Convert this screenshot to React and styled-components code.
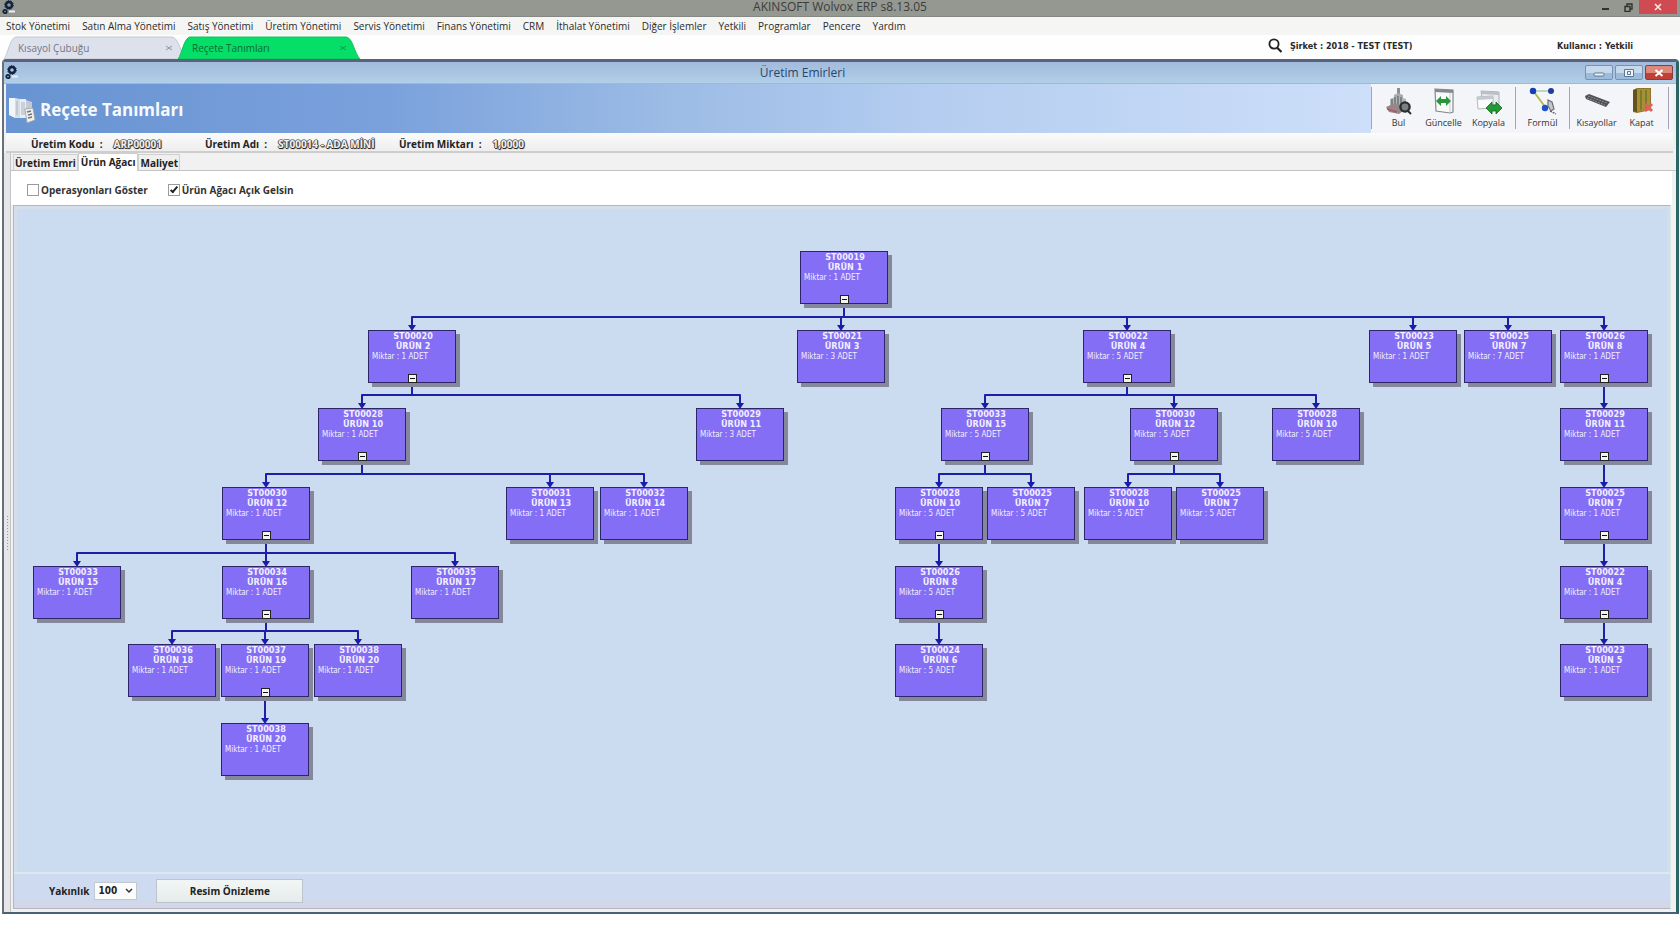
import React from "react";
import styled, { createGlobalStyle, css } from "styled-components";

const ui = `"Open Sans", "Noto Sans", sans-serif`;
const tahoma = `"DejaVu Sans Condensed", "DejaVu Sans", sans-serif`;

const GlobalStyle = createGlobalStyle`
  *, *::before, *::after { box-sizing: border-box; }
  body { margin: 0; background: #fff; font-family: ${ui}; color: #222; }
  button, input, select { font: inherit; color: inherit; margin: 0; }
  button { background: none; border: 0; padding: 0; cursor: pointer; }
`;

const Page = styled.div`
  min-height: 100vh;
  display: flex;
  flex-direction: column;
  padding-bottom: 31px;
`;

const AppTitleBar = styled.header`
  height: 17px;
  background: #959791;
  border-bottom: 1px solid #868883;
  display: grid;
  grid-template-columns: 100px 1fr 100px;
  align-items: start;
`;

const AppTitle = styled.h1`
  margin: 0;
  font-size: 12px;
  line-height: 14px;
  font-weight: 400;
  text-align: center;
  color: #3b3d3a;
`;

const GearLogo = styled.svg`
  display: block;
  width: 16px;
  height: 16px;
`;

const AppLogo = styled.div`
  padding-left: 1px;
`;

const AppControls = styled.div`
  display: flex;
  justify-content: flex-end;
  padding-right: 3px;
`;

const AppControl = styled.button`
  width: ${(p) => (p.$close ? 38 : 22)}px;
  height: 14px;
  display: grid;
  place-items: center;
  color: ${(p) => (p.$close ? "#fbe9e9" : "#30322f")};
  background: ${(p) => (p.$close ? "#cf4a51" : "transparent")};
`;

const MenuBar = styled.nav`
  height: 18px;
  background: #f5f5f4;
  display: flex;
  align-items: center;
  gap: 12px;
  padding: 0 6px;
`;

const MenuItem = styled.button`
  font-size: 10px;
  line-height: 16px;
  color: #2b2b2b;
  white-space: nowrap;
`;

const TabStrip = styled.div`
  height: 24px;
  background: #fdfefd;
  display: flex;
  align-items: flex-end;
`;

const DocTabs = styled.div`
  display: flex;
  flex: 1;
  padding-left: 4px;
`;

const DocTab = styled.div`
  position: relative;
  width: 182px;
  height: 23px;
  margin-right: -8px;
  padding: 0 14px 0 14px;
  display: flex;
  align-items: center;
  justify-content: space-between;
  color: ${(p) => (p.$active ? "#0b6a35" : "#6f7785")};
`;

const DocTabShape = styled.svg`
  position: absolute;
  inset: 0;
  width: 100%;
  height: 100%;
`;

const DocTabButton = styled.button`
  position: relative;
  font-size: 10px;
  line-height: 16px;
`;

const StatusArea = styled.div`
  width: 420px;
  height: 22px;
  align-self: flex-start;
  display: flex;
  align-items: center;
  font: 700 9px/14px ${tahoma};
  color: #2a2a2a;
`;

const SearchButton = styled.button`
  width: 30px;
  height: 16px;
  display: block;
`;

const StatusText = styled.span`
  white-space: nowrap;
  &:last-child { margin-left: auto; margin-right: 47px; }
`;

const Window = styled.main`
  flex: 1;
  display: flex;
  flex-direction: column;
  margin: 0 1px 0 2px;
  border: 2px solid #4a6275;
  border-top: 3px solid #59647c;
  border-left-color: #68707a;
  border-right: 3px solid #2b6566;
  border-radius: 4px 4px 0 0;
  background: #f1f1f2;
`;

const WindowTitleBar = styled.div`
  height: 22px;
  display: flex;
  align-items: center;
  background: linear-gradient(#a3bbdc, #a9c4e1 50%, #b2cfe8);
  border-bottom: 1px solid #9db8d8;
`;

const WindowLogo = styled.div`
  width: 16px;
`;

const WindowTitle = styled.h2`
  flex: 1;
  margin: 0;
  font-size: 12px;
  line-height: 18px;
  font-weight: 400;
  text-align: center;
  color: #27466d;
`;

const WindowControls = styled.div`
  display: flex;
  gap: 2px;
  padding-right: 3px;
`;

const WindowControl = styled.button`
  width: 28px;
  height: 15px;
  display: grid;
  place-items: center;
  border: 1px solid #7592b4;
  border-radius: 2px;
  background: linear-gradient(#c5d8ec 50%, #9dbbdb 50%);
  ${(p) => p.$close && css`
    border-color: #833f42;
    background: linear-gradient(#dd8878 50%, #c04038 50%);
  `}
`;

const Banner = styled.div`
  display: flex;
  height: 49px;
  margin: 0 3px 0 2px;
  background: #f4f5f9;
`;

const BannerTitle = styled.div`
  flex: 1;
  display: flex;
  align-items: center;
  gap: 4px;
  padding: 2px 0 0 2px;
  background: linear-gradient(90deg, #6794d2 0%, #7ba1dc 28%, #9bbbe5 48%, #b5cdf0 68%, #cddff9 100%);
  h3 {
    margin: 0;
    font-size: 17px;
    line-height: 24px;
    color: #f6faff;
  }
`;

const Toolbar = styled.div`
  display: flex;
  align-items: flex-start;
  padding: 3px 4px 0 0;
`;

const ToolGroup = styled.div`
  display: flex;
  height: 42px;
  border-left: 1px solid #a3a6ac;
  padding: 0 4px;
  &:last-child { border-right: 1px solid #a3a6ac; }
`;

const ToolButton = styled.button`
  width: 45px;
  height: 42px;
  display: flex;
  flex-direction: column;
  align-items: center;
  gap: 2px;
  font-size: 9px;
  line-height: 12px;
  color: #333;
  white-space: nowrap;
  svg { width: 28px; height: 28px; display: block; }
`;

const InfoRow = styled.dl`
  margin: 0 3px 0 2px;
  height: 20px;
  display: flex;
  align-items: center;
  padding: 3px 0 0 25px;
  background: linear-gradient(#fbfbfb, #eeeeef);
  border-bottom: 2px solid #cdcecd;
  font-size: 10px;
  line-height: 14px;
  font-weight: 700;
`;

const InfoPair = styled.div`
  display: flex;
  gap: 11px;
  width: ${(p) => p.$width}px;
  dt { white-space: pre; color: #222; }
  dd {
    margin: 0;
    font-size: 10px;
    color: #f2f2f2;
    white-space: nowrap;
    text-shadow: 1px 0 0 #444, -1px 0 0 #555, 0 1px 0 #222, 0 -1px 0 #888, 1px 1px 1px #333;
  }
`;

const Body = styled.div`
  flex: 1;
  display: flex;
`;

const Splitter = styled.div`
  width: 7px;
  display: flex;
  align-items: center;
  justify-content: center;
  background: #e6e6ea;
  border-right: 1px solid #c4c4c8;
  &::before {
    content: "";
    width: 3px;
    height: 36px;
    background: radial-gradient(circle, #9a9aa0 1px, transparent 1px) 0 0 / 3px 3px;
  }
`;

const Content = styled.section`
  flex: 1;
  min-width: 0;
  display: flex;
  flex-direction: column;
`;

const PageTabs = styled.div`
  height: 18px;
  display: flex;
  align-items: flex-end;
  border-bottom: 1px solid #c3c3c3;
  padding-left: 2px;
`;

const PageTab = styled.button`
  height: ${(p) => (p.$active ? 18 : 16)}px;
  margin-bottom: ${(p) => (p.$active ? -1 : 0)}px;
  padding: ${(p) => (p.$active ? "0 2px 2px" : "0 1px")};
  border: 1px solid #cfcfcf;
  border-bottom: 0;
  background: ${(p) => (p.$active ? "#fff" : "#efefef")};
  font-size: 10px;
  line-height: 14px;
  font-weight: 700;
  white-space: nowrap;
`;

const Options = styled.div`
  height: 34px;
  display: flex;
  align-items: center;
  gap: 20px;
  padding: 3px 0 0 16px;
  background: #fff;
  margin-right: 4px;
`;

const CheckLabel = styled.label`
  display: flex;
  align-items: center;
  gap: 2px;
  font-size: 10px;
  line-height: 14px;
  font-weight: 700;
  color: #333;
`;

const CheckBox = styled.input`
  appearance: none;
  width: 12px;
  height: 12px;
  border: 1px solid #9b9b9b;
  background: #fff;
  display: grid;
  place-items: center;
  &:checked::before {
    content: "";
    width: 4px;
    height: 8px;
    border: solid #222;
    border-width: 0 2px 2px 0;
    transform: rotate(40deg);
    margin-top: -2px;
  }
`;

const DiagramPanel = styled.div`
  flex: 1;
  display: flex;
  flex-direction: column;
  margin: 0 5px 3px 2px;
  border: 1px solid #b3b6bf;
  border-right-color: #dce9e6;
`;

const Canvas = styled.div`
  position: relative;
  flex: 1;
  min-height: 560px;
  background: #cbdcf0;
  border: 3px solid #d4deeb;
  border-bottom: 0;
`;

const Connectors = styled.svg`
  position: absolute;
  inset: 0;
  width: 100%;
  height: 100%;
  overflow: visible;
`;

const Node = styled.article`
  position: absolute;
  width: 88px;
  height: 53px;
  border: 1px solid #2c2668;
  background: #846ef5;
  box-shadow: 4px 4px 0 #85879a;
  font: 400 8px/11px ${tahoma};
  color: #f1efff;
  p { margin: 0; padding-left: 3px; }
`;

const NodeName = styled.div`
  font-size: 9px;
  line-height: 10px;
  font-weight: 700;
  text-align: center;
  padding-left: 2px;
`;

const Expander = styled.button`
  position: absolute;
  left: 39px;
  bottom: -1px;
  width: 9px;
  height: 9px;
  border: 1px solid #222;
  background: #f4f4ee;
  &::before {
    content: "";
    display: block;
    height: 1px;
    margin: 0 1px;
    background: #111;
  }
`;

const FooterBar = styled.footer`
  height: 36px;
  display: flex;
  align-items: center;
  padding-left: 35px;
  border-top: 2px solid #dbe9ec;
  background: linear-gradient(#cddaef 70%, #d3d6e6);
  font-size: 10px;
  line-height: 14px;
  font-weight: 700;
`;

const SelectBox = styled.span`
  display: flex;
  align-items: center;
  margin: 0 19px 0 5px;
`;

const ZoomSelect = styled.select`
  appearance: none;
  width: 43px;
  height: 18px;
  padding: 0 3px;
  border: 1px solid #c2c8d2;
  border-radius: 0;
  background: #fbfcfc;
  font: 700 10px/14px ${tahoma};
`;

const Chevron = styled.svg`
  width: 8px;
  height: 6px;
  margin-left: -12px;
  margin-right: 4px;
  pointer-events: none;
`;

const PreviewButton = styled.button`
  width: 147px;
  height: 24px;
  border: 1px solid #bcc5cc;
  background: linear-gradient(#f3f6f6, #e4eceb);
`;

const menuItems = [
  "Stok Yönetimi", "Satın Alma Yönetimi", "Satış Yönetimi", "Üretim Yönetimi",
  "Servis Yönetimi", "Finans Yönetimi", "CRM", "İthalat Yönetimi",
  "Diğer İşlemler", "Yetkili", "Programlar", "Pencere", "Yardım",
];

/* id, parent, left edge, level, code, product, quantity */
const nodes = [
  ["a", null, 783, 0, "ST00019", "ÜRÜN 1", 1],
  ["b", "a", 351, 1, "ST00020", "ÜRÜN 2", 1],
  ["c", "a", 780, 1, "ST00021", "ÜRÜN 3", 3],
  ["d", "a", 1066, 1, "ST00022", "ÜRÜN 4", 5],
  ["e", "a", 1352, 1, "ST00023", "ÜRÜN 5", 1],
  ["f", "a", 1447, 1, "ST00025", "ÜRÜN 7", 7],
  ["g", "a", 1543, 1, "ST00026", "ÜRÜN 8", 1],
  ["h", "b", 301, 2, "ST00028", "ÜRÜN 10", 1],
  ["i", "b", 679, 2, "ST00029", "ÜRÜN 11", 3],
  ["j", "d", 924, 2, "ST00033", "ÜRÜN 15", 5],
  ["k", "d", 1113, 2, "ST00030", "ÜRÜN 12", 5],
  ["l", "d", 1255, 2, "ST00028", "ÜRÜN 10", 5],
  ["m", "g", 1543, 2, "ST00029", "ÜRÜN 11", 1],
  ["n", "h", 205, 3, "ST00030", "ÜRÜN 12", 1],
  ["o", "h", 489, 3, "ST00031", "ÜRÜN 13", 1],
  ["p", "h", 583, 3, "ST00032", "ÜRÜN 14", 1],
  ["q", "j", 878, 3, "ST00028", "ÜRÜN 10", 5],
  ["r", "j", 970, 3, "ST00025", "ÜRÜN 7", 5],
  ["s", "k", 1067, 3, "ST00028", "ÜRÜN 10", 5],
  ["t", "k", 1159, 3, "ST00025", "ÜRÜN 7", 5],
  ["u", "m", 1543, 3, "ST00025", "ÜRÜN 7", 1],
  ["v", "n", 16, 4, "ST00033", "ÜRÜN 15", 1],
  ["w", "n", 205, 4, "ST00034", "ÜRÜN 16", 1],
  ["x", "n", 394, 4, "ST00035", "ÜRÜN 17", 1],
  ["y", "q", 878, 4, "ST00026", "ÜRÜN 8", 5],
  ["z", "u", 1543, 4, "ST00022", "ÜRÜN 4", 1],
  ["A", "w", 111, 5, "ST00036", "ÜRÜN 18", 1],
  ["B", "w", 204, 5, "ST00037", "ÜRÜN 19", 1],
  ["C", "w", 297, 5, "ST00038", "ÜRÜN 20", 1],
  ["D", "y", 878, 5, "ST00024", "ÜRÜN 6", 5],
  ["E", "z", 1543, 5, "ST00023", "ÜRÜN 5", 1],
  ["F", "B", 204, 6, "ST00038", "ÜRÜN 20", 1],
].map(([id, parent, x, level, code, name, qty]) => ({ id, parent, x, level, code, name, qty }));

const levelTops = [42, 121, 199, 278, 357, 435, 514];
const byId = Object.fromEntries(nodes.map((n) => [n.id, n]));
const center = (n) => n.x + 44;

function Gears() {
  return (
    <GearLogo viewBox="0 0 16 16" aria-hidden="true">
      <circle cx="8" cy="5" r="3" fill="none" stroke="#12233d" strokeWidth="2.4" />
      <circle cx="8" cy="5" r="4.4" fill="none" stroke="#12233d" strokeWidth="1" strokeDasharray="1.4 1.3" />
      <circle cx="4" cy="11.5" r="1.7" fill="none" stroke="#12233d" strokeWidth="1.8" />
      <path d="M8 11.5h6" stroke="#e8eef5" strokeWidth="2" />
    </GearLogo>
  );
}

function LedgerIcon() {
  return (
    <svg width="28" height="28" viewBox="0 0 28 28" aria-hidden="true">
      <path d="M1 2h6v20l-6-3z" fill="#f2f6fb" />
      <path d="M7 2l5 1v19l-5 0z" fill="#d5dde6" />
      <path d="M12 3l6 0v19l-6 0z" fill="#e9edf1" />
      <path d="M18 4l6 2v14l-6 3z" fill="#c3cad2" />
      <path d="M9 5v14M14 6v13M16 6v13" stroke="#aab4bf" strokeWidth="1" />
      <path d="M17 13l8-1 2 12-8 3z" fill="#f0efeb" stroke="#98a0a8" strokeWidth=".8" />
      <path d="M19 16l4-1M20 19l4-1M20 22l4-1" stroke="#6f767c" strokeWidth="1.4" />
    </svg>
  );
}

const icons = {
  bul: (
    <svg viewBox="0 0 28 28" aria-hidden="true">
      <path d="M12 1h3v9h-3z" fill="#8d9092" />
      <path d="M9 8l4-2 5 2v5H9z" fill="#a9acae" />
      <path d="M5 12l8-3 8 3v7l-8 3-8-3z" fill="#b4b7b9" />
      <path d="M7 12v6M10 10v9M13 9v10M16 10v8" stroke="#65696c" strokeWidth="1.3" />
      <path d="M1 20l9-4 12 5-8 6-10-2z" fill="#94888c" />
      <path d="M2 22l10 3" stroke="#b5535d" strokeWidth="1.6" />
      <circle cx="20" cy="20" r="4.6" fill="#7c8083" stroke="#2c2f31" strokeWidth="2.4" />
      <path d="M23 24l3 3" stroke="#2c2f31" strokeWidth="2" />
    </svg>
  ),
  guncelle: (
    <svg viewBox="0 0 28 28" aria-hidden="true">
      <path d="M5 2l18 1v22l-3 1L6 24z" fill="#f8faf9" stroke="#84898b" strokeWidth="1.2" />
      <path d="M5 2l18 1v3L5 5z" fill="#85898d" />
      <path d="M20 6v19" stroke="#c9cdd0" strokeWidth="1" />
      <path d="M6 14l5-5v3h5V9l5 5-5 5v-3h-5v3z" fill="#28953c" />
    </svg>
  ),
  kopyala: (
    <svg viewBox="0 0 28 28" aria-hidden="true">
      <path d="M6 4l18 1v13l-16 0z" fill="#e8ecef" stroke="#a9b0b6" />
      <path d="M6 4l18 1v3L6 7z" fill="#b9c0c6" />
      <path d="M2 10l16-1v12l-15 1z" fill="#fafbfc" stroke="#b3b9bf" />
      <path d="M2 10l16-1v3l-16 1z" fill="#c3c9cf" />
      <path d="M11 21l6-6v3h4v-3l6 6-6 6v-3h-4v3z" fill="#229a35" stroke="#116520" strokeWidth=".8" />
    </svg>
  ),
  formul: (
    <svg viewBox="0 0 28 28" aria-hidden="true">
      <path d="M5 4h17" stroke="#a8d3b6" strokeWidth="1.6" />
      <path d="M5 5l12 16" stroke="#adb94e" strokeWidth="1.8" />
      <circle cx="4" cy="4" r="3.2" fill="#153db4" />
      <circle cx="22" cy="4" r="3" fill="#1b3e9f" />
      <circle cx="16" cy="21" r="3.2" fill="#2250cc" />
      <path d="M19 13l4 2 2 7-3 2-3-5z" fill="#c4c7cb" stroke="#6c7075" strokeWidth="1.2" />
      <path d="M21 24l6 3" stroke="#5d6065" strokeWidth="1.4" strokeDasharray="2 1" />
    </svg>
  ),
  kisayollar: (
    <svg viewBox="0 0 28 28" aria-hidden="true">
      <path d="M2 9l4-2 21 8-4 5L3 12z" fill="#4e5256" />
      <path d="M5 9l19 7M4 11l18 7" stroke="#8d9195" strokeWidth="1" strokeDasharray="2 1" />
    </svg>
  ),
  kapat: (
    <svg viewBox="0 0 28 28" aria-hidden="true">
      <path d="M5 3l4-2 14 0v22l-14 3-4-1z" fill="#8f7528" />
      <path d="M9 2h13v20l-13 3z" fill="#a98f38" />
      <path d="M5 3l4-1v23l-4-1z" fill="#66521b" />
      <path d="M13 3v20M18 3v19" stroke="#6d7a2a" strokeWidth="1.6" />
      <path d="M17 17l7 7M24 17l-7 7" stroke="#e0605b" strokeWidth="3" />
    </svg>
  ),
};

const toolGroups = [
  [["bul", "Bul"], ["guncelle", "Güncelle"], ["kopyala", "Kopyala"]],
  [["formul", "Formül"]],
  [["kisayollar", "Kısayollar"], ["kapat", "Kapat"]],
];

function DocumentTab({ label, active }) {
  return (
    <DocTab $active={active}>
      <DocTabShape viewBox="0 0 184 23" preserveAspectRatio="none" aria-hidden="true">
        <path d="M0 23C4 18 6 2 12 1H170C177 2 178 17 184 23Z" fill={active ? "#05de67" : "#dde1ec"} stroke={active ? "#16bd5f" : "#c3c8d2"} />
      </DocTabShape>
      <DocTabButton>{label}</DocTabButton>
      <DocTabButton aria-label={`${label} kapat`}>
        <svg width="6" height="6" viewBox="0 0 6 6" display="block">
          <path d="M0 1l6 4M0 5l6-4" stroke={active ? "#0da34d" : "#8c92a0"} />
        </svg>
      </DocTabButton>
    </DocTab>
  );
}

function Tree() {
  return (
    <Canvas>
      <Connectors aria-hidden="true">
        {nodes.filter((n) => n.parent).map((n) => {
          const parent = byId[n.parent];
          const x = center(n);
          const y = levelTops[n.level];
          return (
            <g key={n.id}>
              <path
                d={`M${center(parent)} ${levelTops[parent.level] + 57}V${y - 13}H${x}V${y - 3}`}
                fill="none" stroke="#1c20a6" strokeWidth="2" strokeLinejoin="round"
              />
              <path d={`M${x - 4} ${y - 5}h8l-4 6z`} fill="#1a1cab" />
            </g>
          );
        })}
      </Connectors>
      {nodes.map((n) => (
        <Node key={n.id} style={{ left: n.x, top: levelTops[n.level] }}>
          <NodeName>{n.code}<br />{n.name}</NodeName>
          <p>Miktar : {n.qty} ADET</p>
          {nodes.some((c) => c.parent === n.id) && <Expander aria-label="Daralt" />}
        </Node>
      ))}
    </Canvas>
  );
}

export default function App() {
  return (
    <Page>
      <GlobalStyle />
      <AppTitleBar>
        <AppLogo><Gears /></AppLogo>
        <AppTitle>AKINSOFT Wolvox ERP s8.13.05</AppTitle>
        <AppControls>
          <AppControl aria-label="Simge durumuna küçült">
            <svg width="8" height="8" viewBox="0 0 8 8"><path d="M0 6h7" stroke="currentColor" strokeWidth="2" /></svg>
          </AppControl>
          <AppControl aria-label="Önceki boyut">
            <svg width="9" height="9" viewBox="0 0 9 9"><path d="M1 3.5h5v5H1zM3 3V1h5v5H6" fill="none" stroke="currentColor" strokeWidth="1.4" /></svg>
          </AppControl>
          <AppControl $close aria-label="Kapat">
            <svg width="8" height="8" viewBox="0 0 8 8"><path d="M1 1l6 6M7 1L1 7" stroke="currentColor" strokeWidth="1.6" /></svg>
          </AppControl>
        </AppControls>
      </AppTitleBar>

      <MenuBar>{menuItems.map((m) => <MenuItem key={m}>{m}</MenuItem>)}</MenuBar>

      <TabStrip>
        <DocTabs>
          <DocumentTab label="Kısayol Çubuğu" />
          <DocumentTab label="Reçete Tanımları" active />
        </DocTabs>
        <StatusArea>
          <SearchButton aria-label="Ara">
            <svg width="16" height="16" viewBox="0 0 16 16">
              <circle cx="7" cy="6" r="4.6" fill="none" stroke="#222" strokeWidth="1.8" />
              <path d="M10 9.5l4.5 4.5" stroke="#222" strokeWidth="2.2" />
            </svg>
          </SearchButton>
          <StatusText>Şirket : 2018 - TEST (TEST)</StatusText>
          <StatusText>Kullanıcı : Yetkili</StatusText>
        </StatusArea>
      </TabStrip>

      <Window>
        <WindowTitleBar>
          <WindowLogo><Gears /></WindowLogo>
          <WindowTitle>Üretim Emirleri</WindowTitle>
          <WindowControls>
            <WindowControl aria-label="Küçült">
              <svg width="12" height="8" viewBox="0 0 12 8"><rect x="1" y="4" width="10" height="3" rx="1" fill="#eef4fa" stroke="#5c7896" /></svg>
            </WindowControl>
            <WindowControl aria-label="Büyüt">
              <svg width="10" height="8" viewBox="0 0 10 8"><path d="M.5.5h9v7h-9zM3.5 2.5h3v3h-3z" fill="#eef4fa" stroke="#5c7896" /></svg>
            </WindowControl>
            <WindowControl $close aria-label="Pencereyi kapat">
              <svg width="10" height="8" viewBox="0 0 10 8"><path d="M1.5 1l7 6M8.5 1l-7 6" stroke="#fff" strokeWidth="2" /></svg>
            </WindowControl>
          </WindowControls>
        </WindowTitleBar>

        <Banner>
          <BannerTitle><LedgerIcon /><h3>Reçete Tanımları</h3></BannerTitle>
          <Toolbar>
            {toolGroups.map((group, i) => (
              <ToolGroup key={i}>
                {group.map(([icon, label]) => (
                  <ToolButton key={icon}>{icons[icon]}{label}</ToolButton>
                ))}
              </ToolGroup>
            ))}
          </Toolbar>
        </Banner>

        <InfoRow>
          <InfoPair $width={174}><dt>Üretim Kodu  :</dt><dd>ARP00001</dd></InfoPair>
          <InfoPair $width={194}><dt>Üretim Adı  :</dt><dd>ST00014 - ADA MİNİ</dd></InfoPair>
          <InfoPair $width={140}><dt>Üretim Miktarı  :</dt><dd>1,0000</dd></InfoPair>
        </InfoRow>

        <Body>
          <Splitter />
          <Content>
            <PageTabs role="tablist">
              <PageTab role="tab">Üretim Emri</PageTab>
              <PageTab role="tab" $active aria-selected="true">Ürün Ağacı</PageTab>
              <PageTab role="tab">Maliyet</PageTab>
            </PageTabs>
            <Options>
              <CheckLabel><CheckBox type="checkbox" />Operasyonları Göster</CheckLabel>
              <CheckLabel><CheckBox type="checkbox" defaultChecked />Ürün Ağacı Açık Gelsin</CheckLabel>
            </Options>
            <DiagramPanel>
              <Tree />
              <FooterBar>
                <label htmlFor="zoom">Yakınlık</label>
                <SelectBox>
                  <ZoomSelect id="zoom" defaultValue="100">
                    <option>50</option>
                    <option>75</option>
                    <option>100</option>
                  </ZoomSelect>
                  <Chevron viewBox="0 0 8 6" aria-hidden="true"><path d="M1 1l3 3 3-3" fill="none" stroke="#333" strokeWidth="1.5" /></Chevron>
                </SelectBox>
                <PreviewButton>Resim Önizleme</PreviewButton>
              </FooterBar>
            </DiagramPanel>
          </Content>
        </Body>
      </Window>
    </Page>
  );
}
